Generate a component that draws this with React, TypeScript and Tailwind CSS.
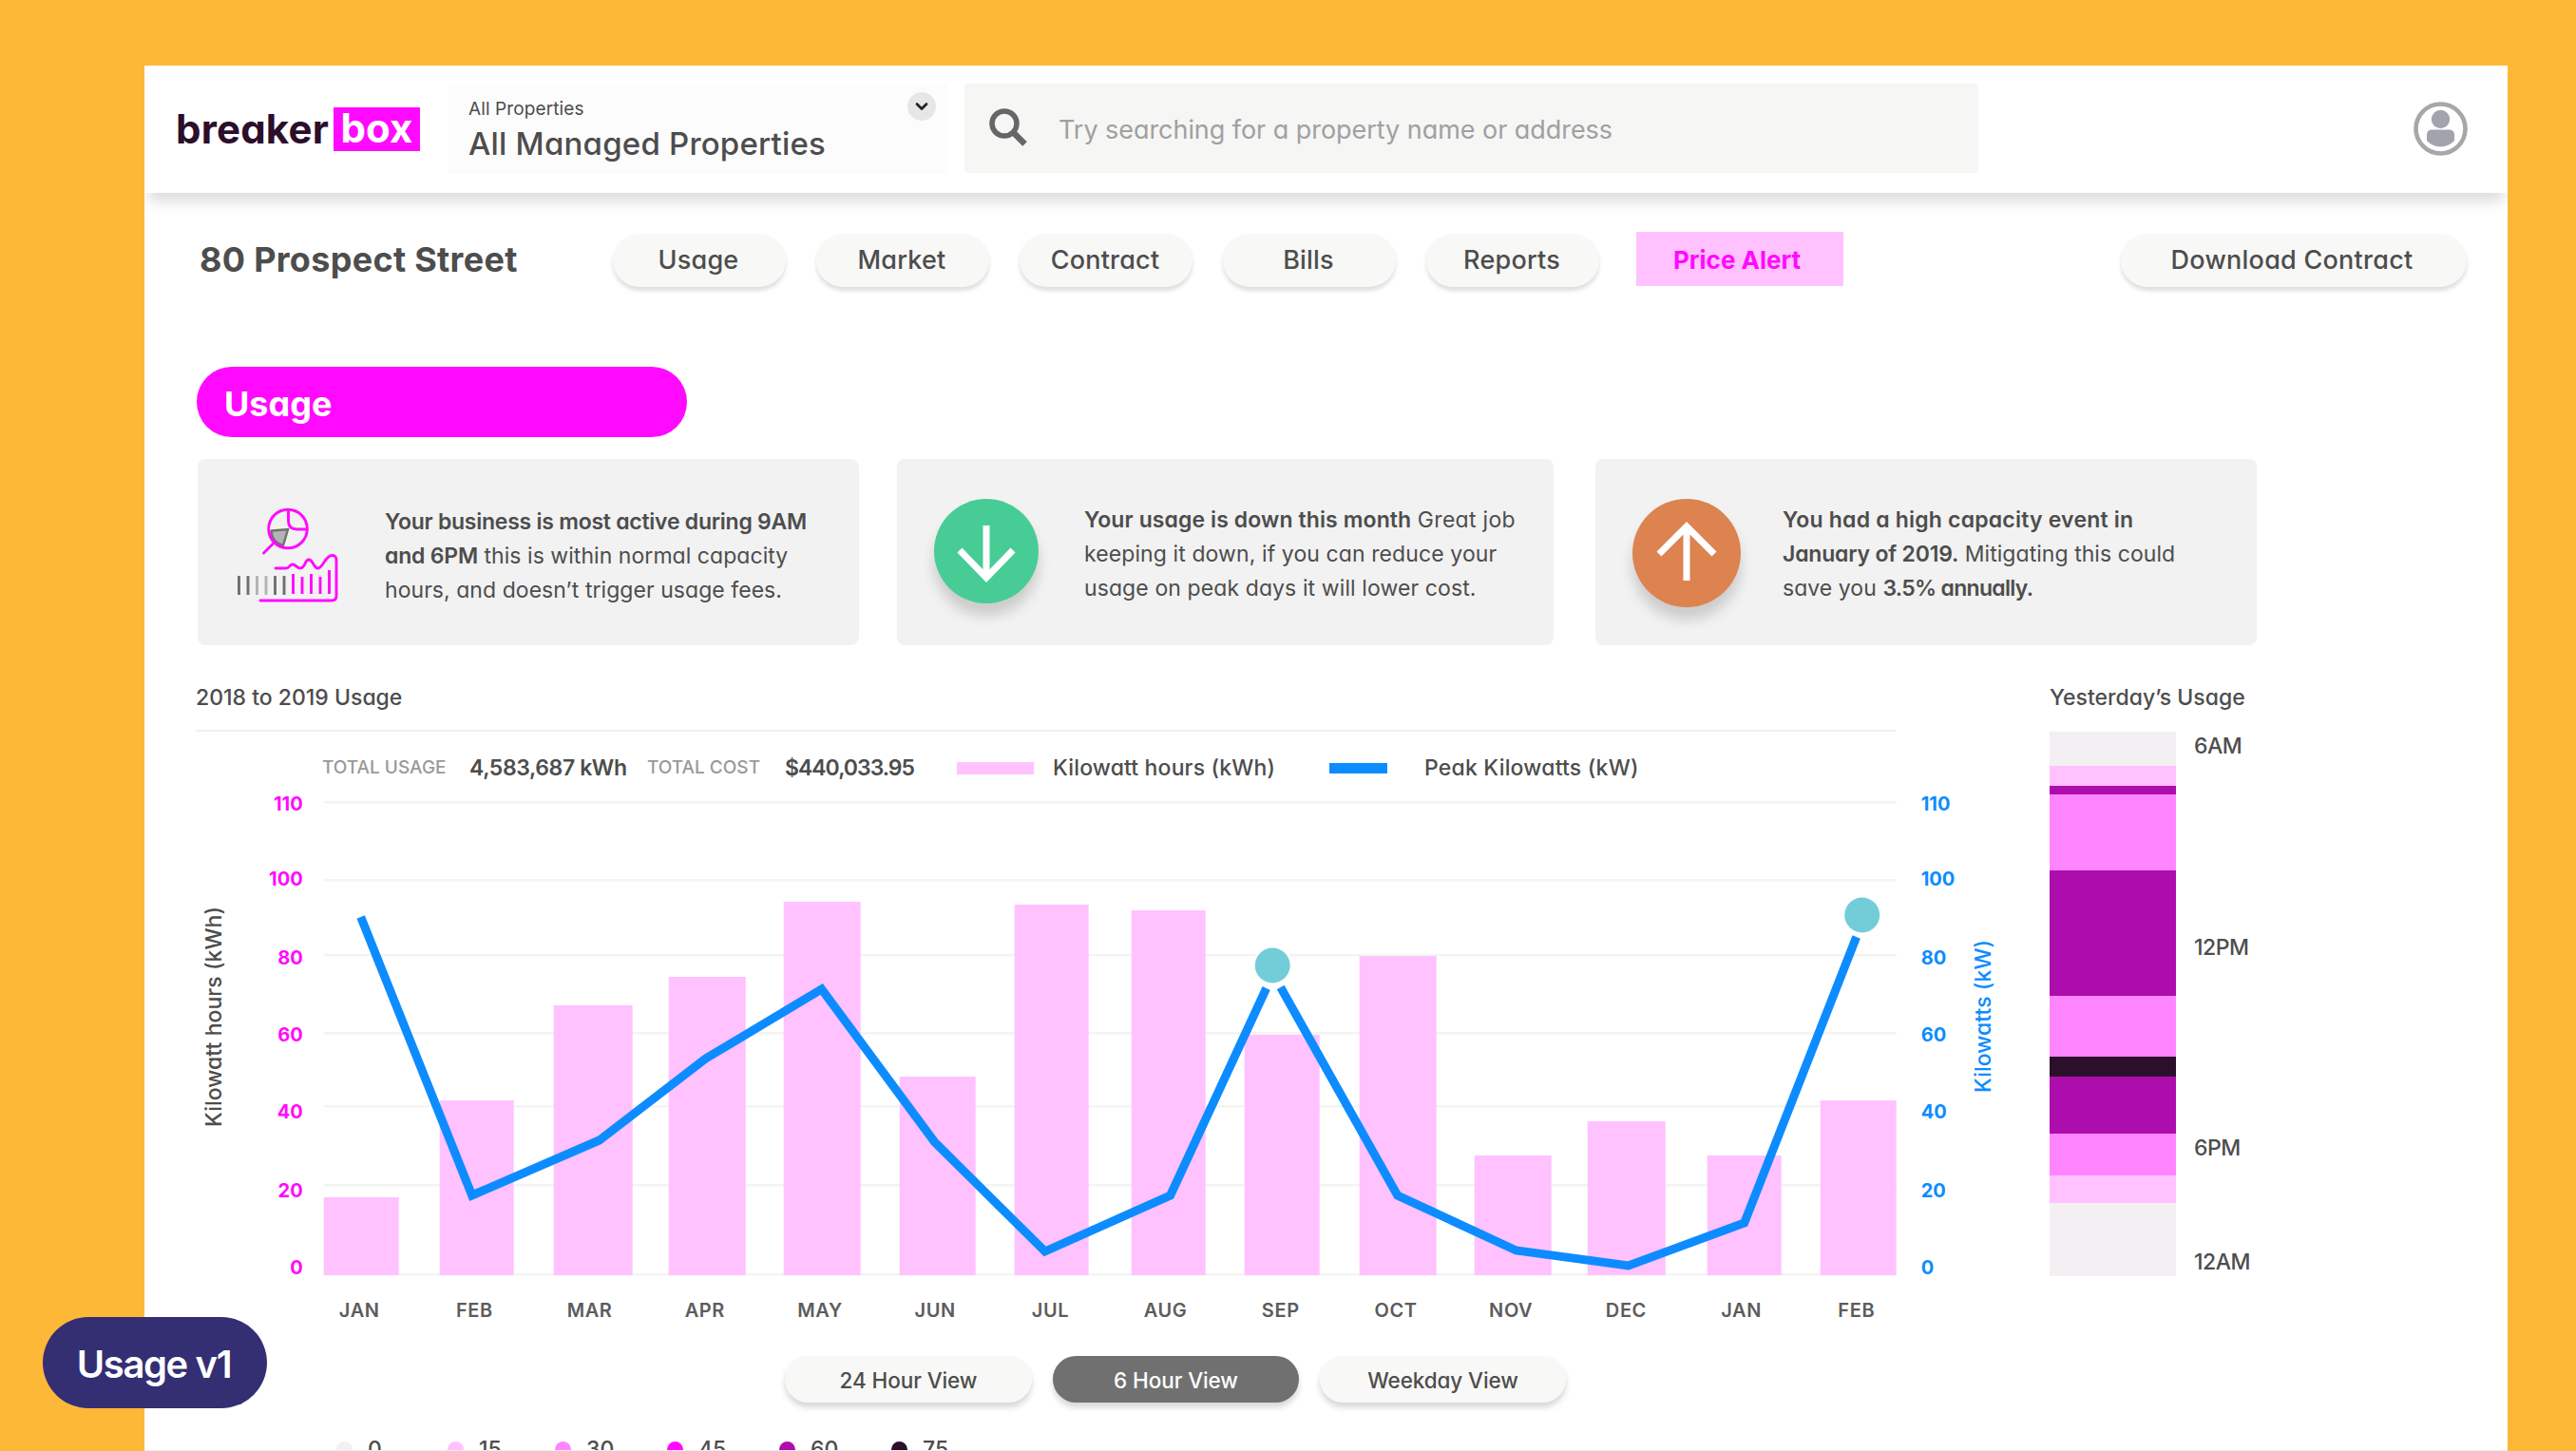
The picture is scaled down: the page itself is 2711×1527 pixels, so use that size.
import { useState } from 'react';
import { ChevronDown } from 'lucide-react';

const TABS = ['Usage', 'Market', 'Contract', 'Bills', 'Reports'];

const VIEWS = [
  { name: '24 Hour View', width: 'w-[260px]' },
  { name: '6 Hour View', width: 'w-[259px]' },
  { name: 'Weekday View', width: 'w-[259px]' },
];

// Chart geometry, in px of the chart's own canvas
const BASELINE = 522;

const BARS = [
  { month: 'JAN', x: 134, width: 79, top: 440 },
  { month: 'FEB', x: 256, width: 78, top: 338 },
  { month: 'MAR', x: 376, width: 83, top: 238 },
  { month: 'APR', x: 497, width: 81, top: 208 },
  { month: 'MAY', x: 618, width: 81, top: 129 },
  { month: 'JUN', x: 740, width: 80, top: 313 },
  { month: 'JUL', x: 861, width: 78, top: 132 },
  { month: 'AUG', x: 984, width: 78, top: 138 },
  { month: 'SEP', x: 1103, width: 79, top: 269 },
  { month: 'OCT', x: 1224, width: 81, top: 186 },
  { month: 'NOV', x: 1345, width: 81, top: 396 },
  { month: 'DEC', x: 1464, width: 82, top: 360 },
  { month: 'JAN', x: 1590, width: 78, top: 396 },
  { month: 'FEB', x: 1709, width: 80, top: 338 },
];

const TICKS = [
  { value: 110, line: 24, label: 25 },
  { value: 100, line: 106, label: 104 },
  { value: 80, line: 185, label: 187 },
  { value: 60, line: 267, label: 268 },
  { value: 40, line: 344, label: 349 },
  { value: 20, line: 427, label: 432 },
  { value: 0, line: 521, label: 513 },
];

const HEAT_LEGEND = [
  { value: 0, color: 'bg-[#f2f0f2]', width: 'w-[117px]' },
  { value: 15, color: 'bg-[#ffc2ff]', width: 'w-[113px]' },
  { value: 30, color: 'bg-[#ff85ff]', width: 'w-[118px]' },
  { value: 45, color: 'bg-[#ff0aff]', width: 'w-[118px]' },
  { value: 60, color: 'bg-[#ad0dad]', width: 'w-[118px]' },
  { value: 75, color: 'bg-[#2b0f2b]', width: 'w-[118px]' },
];

const HEAT_STACK = [
  'h-[36px] bg-[#f3eff3]',
  'h-[21px] bg-[#ffc2ff]',
  'h-[9px] bg-[#ad0dad]',
  'h-[80px] bg-[#ff85ff]',
  'h-[132px] bg-[#ad0dad]',
  'h-[64px] bg-[#ff85ff]',
  'h-[21px] bg-[#2b0f2b]',
  'h-[60px] bg-[#ad0dad]',
  'h-[44px] bg-[#ff85ff]',
  'h-[29px] bg-[#ffc2ff]',
  'h-[77px] bg-[#f3eff3]',
];

function Header() {
  return (
    <header className="relative flex h-[134px] shrink-0 items-start bg-white pl-[33px] shadow-[0_14px_14px_-5px_rgba(0,0,0,0.14)]">
      <div className="mt-[44px] flex h-[46px] w-[287px] items-center gap-[5px] text-[42px] font-bold leading-none">
        <span className="w-[161px] whitespace-nowrap tracking-[0.2px] text-[#2b0f2b]">breaker</span>
        <span className="flex h-[46px] w-[91px] items-center justify-center bg-[#ff0aff] pb-[2px] text-white">
          box
        </span>
      </div>

      <div className="mt-[19px] flex h-[95px] w-[525px] justify-between bg-[#fcfcfc] pl-[21px] pr-[12px]">
        <div className="whitespace-nowrap">
          <div className="mt-[15px] text-[19px] leading-6 tracking-[0.1px] text-[#4d4d4d]">All Properties</div>
          <div className="mt-[5px] text-[33px] font-medium leading-[38px] tracking-[0.2px] text-[#4d4d4d]">
            All Managed Properties
          </div>
        </div>
        <button className="mt-[9px] flex h-[30px] w-[30px] items-center justify-center rounded-full bg-[#e6e6e6]">
          <ChevronDown className="h-[20px] w-[20px] text-[#222]" strokeWidth={3.2} />
        </button>
      </div>

      <div className="ml-[18px] mt-[19px] flex h-[94px] w-[1067px] items-center rounded bg-[#f6f6f5] pl-[26px]">
        <svg className="h-[42px] w-[42px]" viewBox="0 0 42 42" fill="none" stroke="#666" strokeWidth="5.5">
          <circle cx="16" cy="16" r="13" />
          <path d="M25 25 37.5 37.5" strokeWidth="6.5" />
        </svg>
        <span className="ml-[31px] mt-[5px] whitespace-nowrap text-[27px] tracking-[-0.05px] text-[#a0a0a0]">
          Try searching for a property name or address
        </span>
      </div>

      <svg className="ml-auto mr-[42px] mt-[38px] h-[57px] w-[57px]" viewBox="0 0 57 57">
        <circle cx="28.5" cy="28.5" r="26" fill="#fff" stroke="#a7a7aa" strokeWidth="4.6" />
        <circle cx="28.5" cy="18.5" r="9.7" fill="#a3a3ae" />
        <path
          d="M19 29.5h19a5 5 0 0 1 5 5v6.5a19.5 19.5 0 0 1-29 0v-6.5a5 5 0 0 1 5-5Z"
          fill="#a3a3ae"
        />
      </svg>
    </header>
  );
}

function Toolbar() {
  return (
    <div className="mt-[43px] flex h-14 shrink-0 items-center pl-[58px] text-[27px] font-medium text-[#4d4d4d]">
      <h1 className="w-[435px] whitespace-nowrap pb-[2px] text-[36px] font-bold leading-none tracking-[0.3px]">
        80 Prospect Street
      </h1>
      <nav className="flex items-center gap-8">
        {TABS.map(tab => (
          <button
            key={tab}
            className="h-14 w-[182px] rounded-full bg-[#f8f8f6] pr-[2px] tracking-[0.2px] shadow-[0_4px_4px_rgba(0,0,0,0.13)]"
          >
            {tab}
          </button>
        ))}
      </nav>
      <button className="-mt-[3px] ml-[39px] h-[57px] w-[218px] bg-[#ffc2ff] pr-[6px] pt-px text-[26px] font-bold text-[#ff0aff]">
        Price Alert
      </button>
      <button className="ml-auto mr-[43px] h-14 w-[364px] rounded-full bg-[#f8f8f6] pr-[4px] tracking-[0.25px] shadow-[0_4px_4px_rgba(0,0,0,0.13)]">
        Download Contract
      </button>
    </div>
  );
}

// Magnifier over a pie, above a row of bars framed by a trend line
function BusinessIcon() {
  return (
    <svg className="h-[104px] w-[112px] shrink-0" viewBox="0 0 112 104" fill="none">
      <path d="M39 27.5 56 26 51 43C44 41 39 36 38.5 28Z" fill="#b3b3b3" stroke="#707070" strokeWidth="2.4" />
      <g stroke="#ff0aff" strokeWidth="2.9" strokeLinecap="round" strokeLinejoin="round">
        <circle cx="56" cy="25.5" r="20.3" />
        <path d="M56.5 6v11q0 9 9 9H76" />
        <path d="M41.5 40 30.5 51" />
        <path d="M43 67h11c4 0 3.5-4 7-4s4 4 8 4c5.5 0 4.5-9 9-9s5 9 9.5 9c5 0 8-13 14.5-13.5 3-.3 5 1.5 5 4.5v38q0 5-5 5H27" />
        <path d="M61.5 73v21M71 76v18M80.5 73v21M90 76v18M99.5 69v25" strokeLinecap="butt" />
      </g>
      <path d="M4.5 75v20M14 75v20M42.5 75v20M52 75v20" stroke="#707070" strokeWidth="2.9" />
      <path d="M23.5 75v20M33 75v20" stroke="#b3b3b3" strokeWidth="2.9" />
    </svg>
  );
}

function InsightCards() {
  return (
    <div className="mt-[23px] flex h-[196px] shrink-0 pl-[56px] text-[23px] leading-9 text-[#4d4d4d]">
      <div className="flex w-[696px] rounded-lg bg-[#f2f2f2] pl-[39px] pt-[48px]">
        <BusinessIcon />
        <p className="ml-[46px] whitespace-nowrap tracking-[0.05px]">
          <b className="font-semibold tracking-[-0.25px]">Your business is most active during 9AM</b>
          <br />
          <b className="font-semibold tracking-[-0.2px]">and 6PM</b> this is within normal capacity
          <br />
          hours, and doesn’t trigger usage fees.
        </p>
      </div>

      <div className="ml-10 flex w-[691px] rounded-lg bg-[#f2f2f2] pl-[39px]">
        <div className="mt-[42px] h-[110px] w-[110px] shrink-0 rounded-full bg-[#48cc96] shadow-[0_13px_14px_rgba(0,0,0,0.16)]">
          <svg viewBox="0 0 110 110" fill="none" stroke="#fff" strokeWidth="7">
            <path d="M55 28v55M27 54l28 29 28-29" />
          </svg>
        </div>
        <p className="ml-[48px] mt-[46px] whitespace-nowrap tracking-[0.1px]">
          <b className="font-semibold">Your usage is down this month</b>{' '}
          <span className="tracking-[0.3px]">Great job</span>
          <br />
          keeping it down, if you can reduce your
          <br />
          usage on peak days it will lower cost.
        </p>
      </div>

      <div className="ml-11 flex w-[696px] rounded-lg bg-[#f2f2f2] pl-[39px]">
        <div className="mt-[42px] h-[114px] w-[114px] shrink-0 rounded-full bg-[#dc8350] shadow-[0_13px_14px_rgba(0,0,0,0.16)]">
          <svg viewBox="0 0 114 114" fill="none" stroke="#fff" strokeWidth="7">
            <path d="M57 86V29M28 58l29-29 29 29" />
          </svg>
        </div>
        <p className="ml-[44px] mt-[46px] whitespace-nowrap tracking-[0.05px]">
          <b className="font-semibold tracking-[0.2px]">You had a high capacity event in</b>
          <br />
          <b className="font-semibold tracking-[-0.2px]">January of 2019.</b> Mitigating this could
          <br />
          save you <b className="font-semibold tracking-[-0.7px]">3.5% annually.</b>
        </p>
      </div>
    </div>
  );
}

function UsageChart() {
  return (
    <svg className="block h-[580px] w-[1950px]" viewBox="-0.7 0 1950 580">
      {TICKS.map(tick => (
        <g key={tick.value} className="text-[20px] font-bold">
          <rect x="134" y={tick.line - 1} width="1655" height="2.5" fill="#f4f4f3" />
          <text x="112" y={tick.label + 7.5} textAnchor="end" fill="#ff0aff">
            {tick.value}
          </text>
          <text x="1815" y={tick.label + 7.5} fill="#0d8cff">
            {tick.value}
          </text>
        </g>
      ))}

      {BARS.map((bar, i) => (
        <g key={i}>
          <rect x={bar.x} y={bar.top} width={bar.width} height={BASELINE - bar.top} fill="#ffc2ff" />
          <text
            x={171.5 + i * 121.2}
            y="566"
            textAnchor="middle"
            fill="#5c5c5c"
            className="text-[20px] font-semibold tracking-[0.6px]"
          >
            {bar.month}
          </text>
        </g>
      ))}

      {/* Peak kW line, broken around the September marker */}
      <g fill="none" stroke="#0d8cff" strokeWidth="9">
        <path d="M173 145 290 438 424 380 536 294 658 221 777 382 893 497 1025 438 1126 220" />
        <path d="M1141 219 1264 438 1389 496 1507 512 1629 467 1747 166" />
      </g>
      <g fill="#72cdd9" stroke="#fff" strokeWidth="5" className="[paint-order:stroke]">
        <circle cx="1132.5" cy="196" r="18.5" />
        <circle cx="1753" cy="143" r="18.5" />
      </g>

      <text
        transform="translate(26 366) rotate(-90)"
        textLength="232"
        fill="#4d4d4d"
        className="text-[23px] font-medium"
      >
        Kilowatt hours (kWh)
      </text>
      <text
        transform="translate(1888 330) rotate(-90)"
        textLength="161"
        fill="#0d8cff"
        className="text-[23px] font-medium"
      >
        Kilowatts (kW)
      </text>
    </svg>
  );
}

function YesterdayUsage() {
  return (
    <div className="text-[23px] font-medium leading-6 text-[#4d4d4d]">
      <h2 className="whitespace-nowrap">Yesterday’s Usage</h2>
      <div className="mt-6 flex">
        <div className="w-[133px]">
          {HEAT_STACK.map((band, i) => (
            <div key={i} className={band} />
          ))}
        </div>
        <div className="ml-[19px] pt-[3px] tracking-[-0.5px]">
          <div>6AM</div>
          <div className="mt-[188px]">12PM</div>
          <div className="mt-[187px]">6PM</div>
          <div className="mt-[96px]">12AM</div>
        </div>
      </div>
    </div>
  );
}

export default function App() {
  const [view, setView] = useState('6 Hour View');

  return (
    <div className="relative h-[1527px] w-[2711px] overflow-hidden bg-[#fdb838] pl-[152px] pt-[69px] font-['Inter',sans-serif]">
      <main className="flex h-[1458px] w-[2487px] flex-col overflow-hidden border-b border-[#ececec] bg-white [font-feature-settings:'cv11']">
        <Header />
        <Toolbar />

        <div className="ml-[55px] mt-[84px] flex h-[74px] w-[516px] shrink-0 items-center rounded-full bg-[#ff0aff] pl-[29px] pt-[3px] text-[36px] font-bold text-white">
          Usage
        </div>

        <InsightCards />

        <div className="mt-[43px] flex pl-[54px]">
          <section className="w-[1951px] text-[23px] font-medium leading-6 text-[#4d4d4d]">
            <h2>2018 to 2019 Usage</h2>
            <div className="mt-[22px] h-[2px] w-[1789px] bg-[#f0f0f0]" />

            <div className="mt-[26px] flex h-6 items-center whitespace-nowrap pl-[133px]">
              <span className="w-[155px] text-[19px] text-[#999]">TOTAL USAGE</span>
              <span className="w-[187px] font-semibold tracking-[-0.4px]">4,583,687 kWh</span>
              <span className="w-[145px] text-[19px] text-[#999]">TOTAL COST</span>
              <span className="w-[181px] font-semibold tracking-[-1px]">$440,033.95</span>
              <span className="h-[13px] w-[81px] bg-[#ffc2ff]" />
              <span className="ml-[20px] w-[291px] tracking-[0.15px]">Kilowatt hours (kWh)</span>
              <span className="h-[11px] w-[61px] bg-[#0d8cff]" />
              <span className="ml-[39px] tracking-[0.2px]">Peak Kilowatts (kW)</span>
            </div>

            <UsageChart />

            <div className="mt-[27px] flex gap-[22px] pl-[620px]">
              {VIEWS.map(({ name, width }) => (
                <button
                  key={name}
                  onClick={() => setView(name)}
                  className={`h-[49px] rounded-full pt-[3px] text-[22.5px] tracking-[-0.1px] shadow-[0_5px_6px_rgba(0,0,0,0.16)] ${width} ${
                    view === name ? 'bg-[#707070] text-white' : 'bg-[#f8f8f6] text-[#4d4d4d]'
                  }`}
                >
                  {name}
                </button>
              ))}
            </div>

            <div className="mt-[37px] flex pl-[148px]">
              {HEAT_LEGEND.map(({ value, color, width }) => (
                <div key={value} className={`flex items-center gap-4 ${width}`}>
                  <span className={`h-[17px] w-[17px] rounded-full ${color}`} />
                  {value}
                </div>
              ))}
            </div>
          </section>

          <YesterdayUsage />
        </div>
      </main>

      <div className="absolute left-[45px] top-[1386px] flex h-[96px] w-[236px] items-center justify-center rounded-full bg-[#342e73] pr-[2px] pt-[3px] text-[40px] font-semibold tracking-[-1.4px] text-white">
        Usage v1
      </div>
    </div>
  );
}
